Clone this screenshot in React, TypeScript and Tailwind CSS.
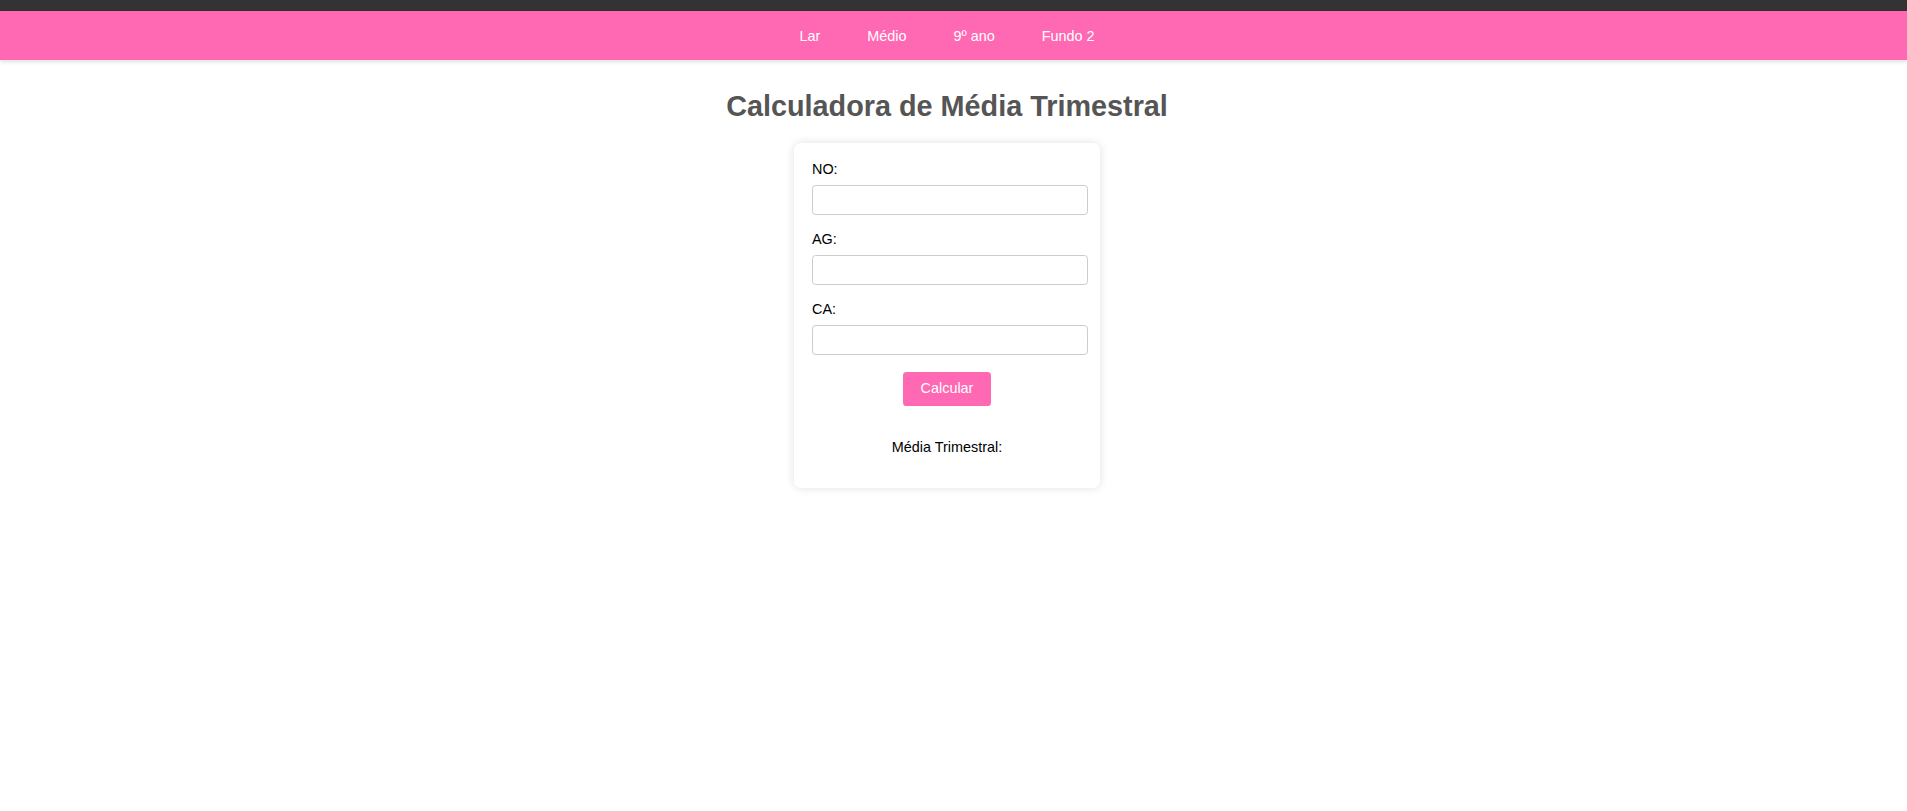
import React from "react";

export default function App() {
  const fields = ["NO:", "AG:", "CA:"];
  return (
    <div className="min-h-[811px] bg-white font-['Liberation_Sans',Arial,sans-serif]">
      <div className="h-[11px] bg-[#333333]" />
      <nav className="h-[49px] bg-[#ff69b4] shadow-[0_2px_4px_rgba(0,0,0,0.12)] pr-[13px]">
        <ul className="flex justify-center gap-[47px] pt-[17px] text-[14.4px] leading-[16.5px] text-white">
          <li>Lar</li>
          <li>Médio</li>
          <li>9º ano</li>
          <li>Fundo 2</li>
        </ul>
      </nav>
      <main className="flex flex-col items-center pr-[13px]">
        <h1 className="mt-[29.5px] text-[28.8px] leading-[33px] font-bold text-[#555555]">
          Calculadora de Média Trimestral
        </h1>
        <div className="mt-[20.5px] w-[306px] rounded-[7px] bg-white pl-[18px] pr-[12px] pt-[18px] pb-[32px] shadow-[0_0_10px_rgba(0,0,0,0.12)]">
          {fields.map((f, i) => (
            <div key={f} className={i === 0 ? "" : "mt-[16px]"}>
              <label className="block text-[14.4px] leading-[16.5px] text-black">{f}</label>
              <input
                type="text"
                className="mt-[7.5px] block h-[30px] w-[276px] rounded-[3.6px] border border-[#cccccc] bg-white outline-none"
              />
            </div>
          ))}
          <div className="mt-[17px] flex justify-center pr-[6px] pl-[0px]">
            <button className="h-[34px] w-[88px] rounded-[3.6px] bg-[#ff69b4] text-[14.4px] text-white">
              Calcular
            </button>
          </div>
          <p className="mt-[33px] pr-[6px] text-center text-[14.4px] leading-[16.5px] text-black">
            Média Trimestral:
          </p>
        </div>
      </main>
    </div>
  );
}
